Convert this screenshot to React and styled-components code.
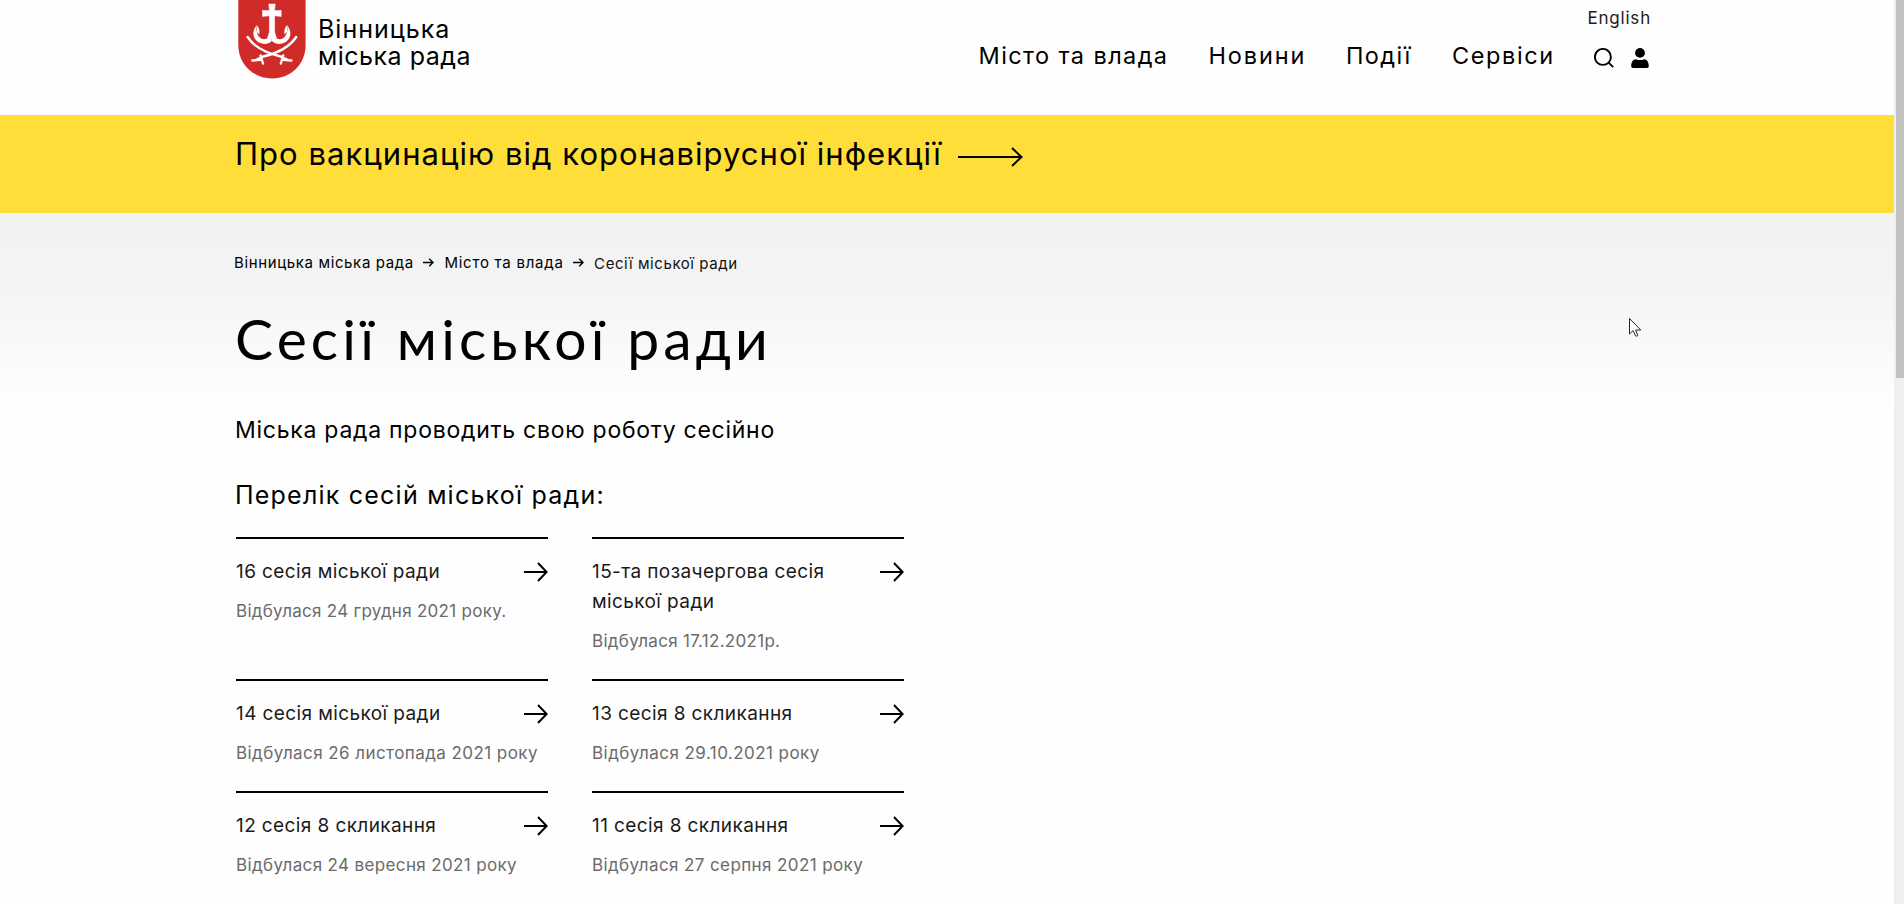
import React from 'react';
import styled, { createGlobalStyle } from 'styled-components';

const GlobalStyle = createGlobalStyle`
  * { box-sizing: border-box; }
  html, body { margin: 0; padding: 0; height: 904px; overflow: hidden; }
  body {
    background: #fefefe;
    color: #000;
    font-family: Inter, "Liberation Sans", sans-serif;
  }
  h1, h2, h3, p { margin: 0; font-weight: 400; }
  a { color: inherit; text-decoration: none; }
`;

const Shell = styled.div`
  display: grid;
  grid-template-columns: 1894px 10px;
  width: 1904px;
  height: 904px;
  overflow: hidden;
`;

const Page = styled.div`
  min-width: 0;
  background: #fefefe;
`;

const ScrollTrack = styled.div`
  padding-left: 2px;
  background: #efefef;
`;

const ScrollThumb = styled.div`
  height: 378px;
  background: #c1c1c1;
`;

const Header = styled.header`
  display: flex;
  justify-content: space-between;
  height: 115px;
  padding: 0 244px 0 238px;
`;

const Logo = styled.a`
  display: flex;
  gap: 10px;
`;

const LogoText = styled.span`
  display: block;
  padding-top: 16px;
  font-size: 25px;
  line-height: 26.5px;
  white-space: nowrap;
`;

const LogoLine = styled.span`
  display: block;
  letter-spacing: ${(p) => p.$tracking}px;
`;

const HeaderRight = styled.div`
  display: flex;
  flex-direction: column;
  align-items: flex-end;
  padding-top: 7px;
`;

const Language = styled.a`
  margin-right: -1px;
  color: #1c1c1c;
  font-size: 17px;
  line-height: 22px;
  letter-spacing: 0.8px;
`;

const Nav = styled.nav`
  display: grid;
  grid-template-columns: 230px 137.5px 106px 142px 37px 19px;
  margin-top: 12px;
  font-size: 23.5px;
  line-height: 30px;
`;

const NavLink = styled.a`
  letter-spacing: ${(p) => p.$tracking}px;
  white-space: nowrap;
`;

const IconButton = styled.a`
  padding-top: 7px;
  line-height: 0;
`;

const Banner = styled.a`
  display: flex;
  align-items: flex-start;
  height: 98px;
  padding: 19px 0 0 235px;
  background: #ffde39;
  font-size: 31px;
  line-height: 40px;
  letter-spacing: 1.03px;
  white-space: nowrap;
`;

const BannerArrow = styled.svg`
  margin: 13px 0 0 16px;
`;

const Main = styled.main`
  height: 691px;
  padding: 40px 0 0 235px;
  background: linear-gradient(#f2f2f2, #f4f4f4 35%, #fefefe) 0 0 / 100% 192px no-repeat;
`;

const Breadcrumbs = styled.div`
  display: flex;
  height: 20px;
  margin-left: -1px;
  font-size: 15px;
  line-height: 20px;
`;

const Crumb = styled.a`
  letter-spacing: ${(p) => p.$tracking}px;
  padding-top: ${(p) => (p.$current ? 1 : 0)}px;
  color: ${(p) => (p.$current ? '#111' : '#000')};
  white-space: nowrap;
`;

const CrumbArrow = styled.svg`
  flex: none;
  margin: 5px 10px 0 9.5px;
`;

const Title = styled.h1`
  margin: 31px 0 0 0;
  font-family: Lato, "Liberation Sans", sans-serif;
  font-size: 57px;
  line-height: 68px;
  letter-spacing: 4.12px;
`;

const Lead = styled.p`
  margin-top: 43px;
  font-size: 23px;
  line-height: 30px;
  letter-spacing: 0.74px;
`;

const ListTitle = styled.h2`
  margin-top: 33px;
  font-size: 25px;
  line-height: 34px;
  letter-spacing: 1.22px;
`;

const SessionGrid = styled.div`
  display: grid;
  grid-template-columns: 312px 312px;
  column-gap: 44px;
  margin: 25px 0 0 1px;
`;

const Card = styled.a`
  padding: 17px 0 26px;
  border-top: 2px solid #000;
`;

const CardHead = styled.div`
  display: flex;
  justify-content: space-between;
`;

const CardTitle = styled.h3`
  width: 260px;
  padding-top: 1px;
  color: #1a1a1a;
  font-size: 19px;
  line-height: 30px;
  letter-spacing: 0.4px;
`;

const CardArrow = styled.svg`
  flex: none;
  margin-top: 5.5px;
`;

const CardDate = styled.p`
  margin-top: 12px;
  color: #6b6b6b;
  font-size: 17px;
  line-height: 24px;
  letter-spacing: ${(p) => p.$tracking}px;
  white-space: nowrap;
`;

/* The pointer floats over the page content. */
const Pointer = styled.svg`
  position: absolute;
  left: 1629px;
  top: 317px;
`;

const sessions = [
  { title: '16 сесія міської ради', date: 'Відбулася 24 грудня 2021 року.', dateTracking: 0.28 },
  { title: '15-та позачергова сесія міської ради', date: 'Відбулася 17.12.2021р.', dateTracking: 0.3 },
  { title: '14 сесія міської ради', date: 'Відбулася 26 листопада 2021 року', dateTracking: 0.43 },
  { title: '13 сесія 8 скликання', date: 'Відбулася 29.10.2021 року', dateTracking: 0.45 },
  { title: '12 сесія 8 скликання', date: 'Відбулася 24 вересня 2021 року', dateTracking: 0.36 },
  { title: '11 сесія 8 скликання', date: 'Відбулася 27 серпня 2021 року', dateTracking: 0.4 },
];

const AnchorSide = () => (
  <g>
    <path
      d="M33.8 34 V41 C31 44 25.5 44.8 21.5 42.8 C15 39.6 13 32 18.8 25 C17.6 30.5 19 35.5 22.8 38.3 C27 40.5 31 38.5 33.8 34Z"
      fill="#fff"
    />
    <path d="M18.8 25 C21.5 28.5 21.8 31 21.2 34.5 L18.8 32Z" fill="#fff" />
    <path d="M9.6 37 C16 47 28 53 42.5 56.5 L50 60" stroke="#fff" strokeWidth="2.4" fill="none" strokeLinecap="round" />
    <path d="M42.8 63.5 L45.2 55.5 M45 59.8 L53.5 60.5" stroke="#fff" strokeWidth="2.4" fill="none" strokeLinecap="round" />
  </g>
);

const Emblem = () => (
  <svg width="70" height="80" viewBox="0 0 70 80">
    <path d="M0.3 0 H67.6 V45 C67.6 64 53 78.5 34 78.5 S0.3 64 0.3 45Z" fill="#d02a29" />
    <path
      d="M30.8 4 H37.2 L36.6 10.8 L43.2 10.3 V16.5 L36.6 15.8 V32 L38.5 38 H29.5 L31.4 32 V15.8 L24.5 16.5 V10.3 L31.4 10.8Z"
      fill="#fff"
      stroke="#fff"
      strokeWidth="0.5"
    />
    <AnchorSide />
    <g transform="translate(67.8 0) scale(-1 1)">
      <AnchorSide />
    </g>
  </svg>
);

const SearchIcon = () => (
  <svg width="20" height="20" viewBox="0 0 20 20" fill="none" stroke="#000" strokeWidth="1.9">
    <circle cx="8.9" cy="8.9" r="8" />
    <path d="M14.6 14.6 L19.2 19.2" />
  </svg>
);

const UserIcon = () => (
  <svg width="18" height="20" viewBox="0 0 18 20">
    <circle cx="9" cy="4.9" r="4.9" />
    <path d="M0.2 18.2 C0.2 14 2 11.2 5 11.2 C7.5 12.4 10.5 12.4 13 11.2 C16 11.2 17.8 14 17.8 18.2 Q17.8 20 16 20 H2 Q0.2 20 0.2 18.2Z" />
  </svg>
);

export default function App() {
  return (
    <Shell>
      <GlobalStyle />
      <Page>
        <Header>
          <Logo>
            <Emblem />
            <LogoText>
              <LogoLine $tracking={1}>Вінницька</LogoLine>
              <LogoLine $tracking={0.5}>міська рада</LogoLine>
            </LogoText>
          </Logo>
          <HeaderRight>
            <Language>English</Language>
            <Nav>
              <NavLink $tracking={1.4}>Місто та влада</NavLink>
              <NavLink $tracking={1.9}>Новини</NavLink>
              <NavLink $tracking={1.4}>Події</NavLink>
              <NavLink $tracking={1.6}>Сервіси</NavLink>
              <IconButton>
                <SearchIcon />
              </IconButton>
              <IconButton>
                <UserIcon />
              </IconButton>
            </Nav>
          </HeaderRight>
        </Header>

        <Banner>
          Про вакцинацію від коронавірусної інфекції
          <BannerArrow width="66" height="20" viewBox="0 0 66 20" fill="none" stroke="#000" strokeWidth="2">
            <path d="M0 10 H63 M54 1 L63.5 10 L54 19" />
          </BannerArrow>
        </Banner>

        <Main>
          <Breadcrumbs>
            <Crumb $tracking={0.63}>Вінницька міська рада</Crumb>
            <CrumbArrow width="11" height="9" viewBox="0 0 11 9" fill="none" stroke="#000" strokeWidth="1.4">
              <path d="M0 4.5 H10 M6.2 0.8 L10 4.5 L6.2 8.2" />
            </CrumbArrow>
            <Crumb $tracking={0.75}>Місто та влада</Crumb>
            <CrumbArrow width="11" height="9" viewBox="0 0 11 9" fill="none" stroke="#000" strokeWidth="1.4">
              <path d="M0 4.5 H10 M6.2 0.8 L10 4.5 L6.2 8.2" />
            </CrumbArrow>
            <Crumb $tracking={0.58} $current>
              Сесії міської ради
            </Crumb>
          </Breadcrumbs>
          <Title>Сесії міської ради</Title>
          <Lead>Міська рада проводить свою роботу сесійно</Lead>
          <ListTitle>Перелік сесій міської ради:</ListTitle>
          <SessionGrid>
            {sessions.map((s) => (
              <Card key={s.title}>
                <CardHead>
                  <CardTitle>{s.title}</CardTitle>
                  <CardArrow width="24" height="20" viewBox="0 0 24 20" fill="none" stroke="#000" strokeWidth="2">
                    <path d="M0 10 H22.5 M14 1 L22.6 10 L14 19" />
                  </CardArrow>
                </CardHead>
                <CardDate $tracking={s.dateTracking}>{s.date}</CardDate>
              </Card>
            ))}
          </SessionGrid>
        </Main>
      </Page>
      <ScrollTrack>
        <ScrollThumb />
      </ScrollTrack>
      <Pointer width="14" height="21" viewBox="0 0 14 21">
        <path
          d="M0.5 1.5 V17 L4 13.6 L6.6 19 Q7.8 19.6 8.8 18.6 L6.6 13 H11.8Z"
          fill="#fff"
          stroke="#26262e"
          strokeWidth="1"
        />
      </Pointer>
    </Shell>
  );
}
